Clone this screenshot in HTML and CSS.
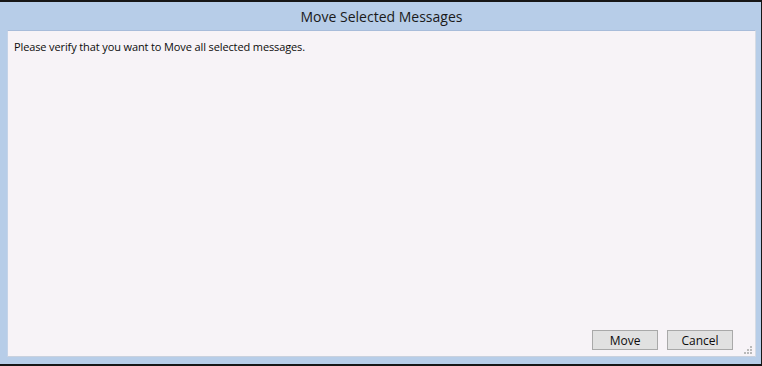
FILE: index.html
```html
<!DOCTYPE html>
<html lang="en">
<head>
  <meta charset="UTF-8">
  <title>Move Selected Messages</title>
<link rel="stylesheet" href="styles.css">
</head>
<body>
<div class="window">
  <div class="title-bar">Move Selected Messages</div>
  <div class="panel">
    <p class="message">Please verify that you want to Move all selected messages.</p>
    <div class="buttons">
      <button class="btn">Move</button>
      <button class="btn">Cancel</button>
    </div>
    <svg class="grip" width="9" height="9" viewBox="0 0 9 9">
      <rect x="6" y="0" width="2" height="2" fill="#b9b9b9"/>
      <rect x="3" y="3" width="2" height="2" fill="#b9b9b9"/>
      <rect x="6" y="3" width="2" height="2" fill="#b9b9b9"/>
      <rect x="0" y="6" width="2" height="2" fill="#b9b9b9"/>
      <rect x="3" y="6" width="2" height="2" fill="#b9b9b9"/>
      <rect x="6" y="6" width="2" height="2" fill="#b9b9b9"/>
    </svg>
  </div>
</div>
</body>
</html>
```

FILE: styles.css
```css
html, body {
  margin: 0;
  padding: 0;
  background: #f0f0f0;
}

.window {
  box-sizing: border-box;
  width: 762px;
  height: 366px;
  border-top: 2px solid #161616;
  border-bottom: 2px solid #161616;
  border-right: 1px solid #161616;
  background: #b7cde8;
  padding: 0 5px 7px 7px;
  display: flex;
  flex-direction: column;
  font-family: "Open Sans", "Noto Sans", sans-serif;
  color: #111;
}

.title-bar {
  height: 28px;
  display: flex;
  align-items: center;
  justify-content: center;
  font-size: 14px;
  color: #1a1a1a;
}

.panel {
  flex: 1;
  position: relative;
  display: flex;
  flex-direction: column;
  background: #f7f3f7;
  border-top: 1px solid #a8bcda;
  border-left: 1px solid #c4d3e8;
  border-right: 1px solid #d6dbe4;
  border-bottom: 1px solid #c9d1de;
}

.message {
  margin: 8px 0 0 6px;
  font-size: 11px;
  line-height: 15px;
  letter-spacing: -0.12px;
  color: #0c0c0c;
}

.buttons {
  margin-top: auto;
  display: flex;
  justify-content: flex-end;
  gap: 9px;
  padding: 0 22px 6px 0;
}

.btn {
  box-sizing: border-box;
  width: 66px;
  height: 20px;
  padding: 0;
  background: #e1e1e1;
  border: 1px solid #a9a9a9;
  border-radius: 0;
  font-family: "Open Sans", "Noto Sans", sans-serif;
  font-size: 12px;
  color: #0c0c0c;
}

.grip {
  position: absolute;
  right: 2px;
  bottom: 1px;
}
```
